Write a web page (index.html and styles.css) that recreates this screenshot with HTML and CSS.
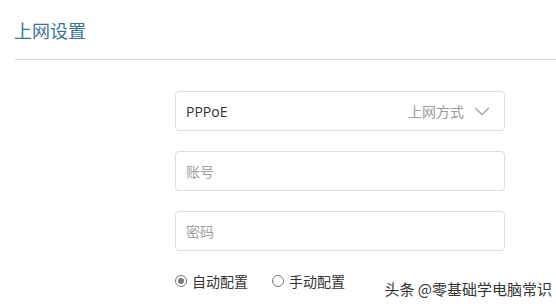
FILE: index.html
```html
<!DOCTYPE html>
<html lang="zh-CN">
<head>
<meta charset="utf-8">
<link rel="stylesheet" href="styles.css">
</head>
<body>
<div class="page">
  <header class="header">
    <h1 class="title">上网设置</h1>
  </header>
  <form class="form">
    <div class="field select">
      <span class="value">PPPoE</span>
      <span class="label">上网方式</span>
      <svg class="chev" width="16" height="9" viewBox="0 0 16 9"><path d="M1 1 L8 7.5 L15 1" fill="none" stroke="#a8a8a8" stroke-width="1.5"/></svg>
    </div>
    <div class="field"><span class="placeholder">账号</span></div>
    <div class="field"><span class="placeholder">密码</span></div>
    <div class="radios">
      <label class="radio"><span class="dot checked"></span>自动配置</label>
      <label class="radio"><span class="dot"></span>手动配置</label>
    </div>
  </form>
  <div class="watermark">头条 @零基础学电脑常识</div>
</div>
</body>
</html>
```
FILE: styles.css
```css
html, body {
  margin: 0;
  padding: 0;
  background: #fff;
}
body {
  font-family: "Noto Sans CJK SC", "Noto Sans", sans-serif;
  width: 556px;
  height: 308px;
  overflow: hidden;
  position: relative;
}
.header {
  margin-left: 15px;
  height: 60px;
  border-bottom: 1px solid #d9d9d9;
  box-sizing: border-box;
  display: flex;
  align-items: flex-start;
}
.title {
  margin: 17px 0 0 -1px;
  font-size: 18px;
  font-weight: 400;
  line-height: 26px;
  color: #3e7396;
}
.form {
  margin: 31px 0 0 175px;
  width: 330px;
  display: flex;
  flex-direction: column;
  gap: 20px;
}
.field {
  height: 40px;
  box-sizing: border-box;
  border: 1px solid #dcdcdc;
  border-radius: 4px;
  display: flex;
  align-items: center;
  padding: 0 14px 0 10px;
  font-size: 14px;
}
.value {
  color: #333;
  font-family: "Open Sans", "Noto Sans", sans-serif;
  font-size: 14px;
}
.label {
  margin-left: auto;
  color: #9a9a9a;
  font-size: 14px;
  margin-right: 10px;
}
.chev { display: block; }
.placeholder {
  color: #a0a0a0;
  font-size: 14px;
}
.radios {
  display: flex;
  gap: 24px;
  margin-top: -2px;
  height: 24px;
  align-items: center;
}
.radio {
  display: flex;
  align-items: center;
  font-size: 14px;
  color: #333;
  gap: 5px;
}
.dot {
  width: 12px;
  height: 12px;
  box-sizing: border-box;
  border: 1px solid #777;
  border-radius: 50%;
  display: flex;
  align-items: center;
  justify-content: center;
}
.dot.checked::after {
  content: "";
  width: 6px;
  height: 6px;
  border-radius: 50%;
  background: #777;
}
.watermark {
  position: absolute;
  right: 4px;
  bottom: 9px;
  font-size: 15px;
  color: #333;
  text-shadow: 0 0 2px #fff, 0 0 2px #fff;
}
```
